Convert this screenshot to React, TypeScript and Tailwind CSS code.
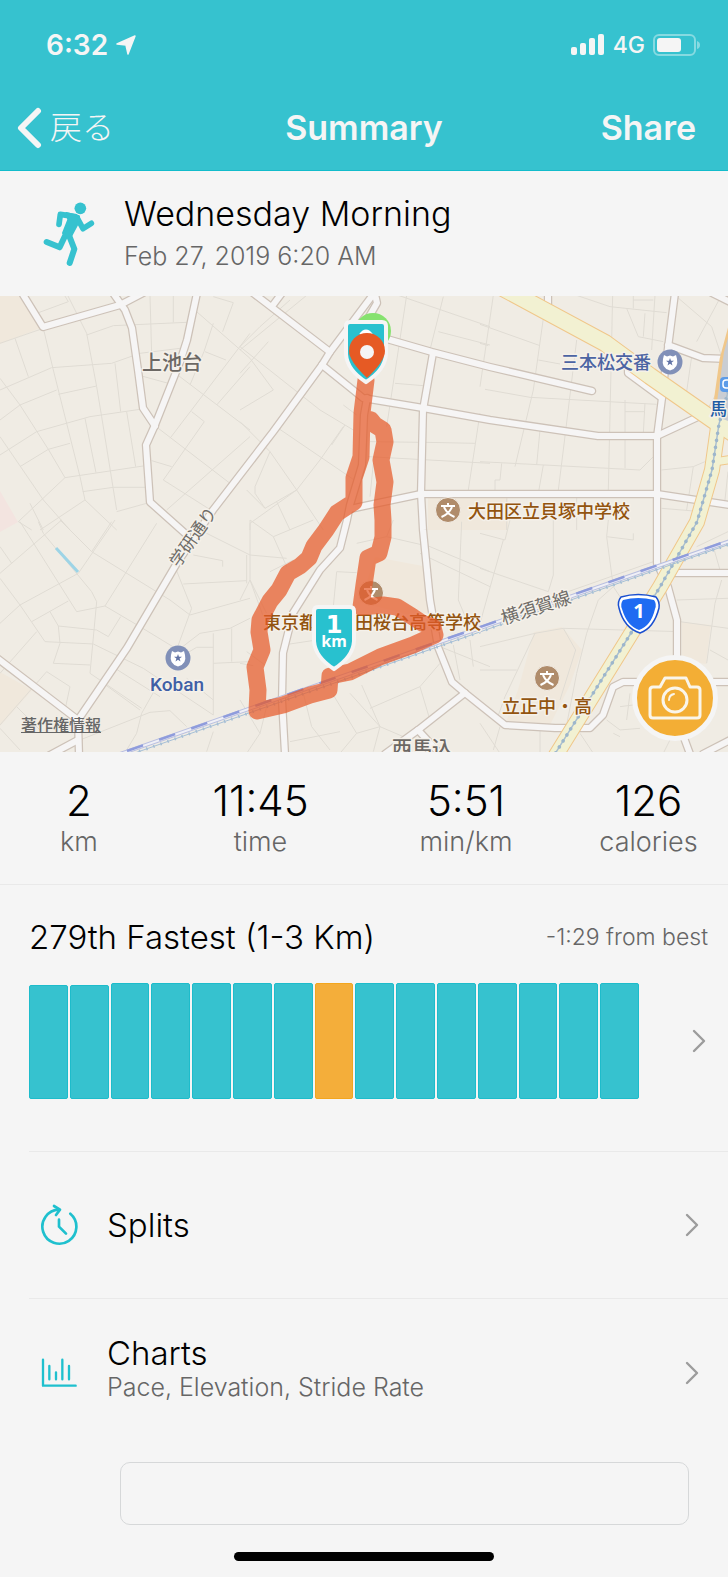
import type { ReactNode } from "react";

const BARS = [114, 114, 116, 116, 116, 116, 116, 116, 116, 116, 116, 116, 116, 116, 116];
const CURRENT_BAR = 7;

const STATS = [
  { value: "2", label: "km", width: "w-[158px]" },
  { value: "11:45", label: "time", width: "w-[205px]" },
  { value: "5:51", label: "min/km", width: "w-[206px]" },
  { value: "126", label: "calories", width: "w-[159px]" },
];

const ROADS = [
  "M22 293L43 327L120 305L143 293",
  "M113 293L125 310L132 328L138 370L143 408L155 426",
  "M197 293L187 340L180 362L155 425L146 445L150 502L187 535",
  "M372 296L330 352L322 365L273 432L213 510L177 563L127 648L78 720L79 754",
  "M-3 658L78 720",
  "M50 755L78 740",
  "M253 293L330 352",
  "M273 305L282 293",
  "M374 290L377 303L366 322",
  "M322 365L363 398L423 408L490 420L598 436H657L700 416",
  "M380 337L432 352L490 367L592 391",
  "M433 353L423 410L421 493L423 530L430 600L438 647L452 682L465 693L505 725L555 728H590L603 715L613 687L623 682H730",
  "M350 509L421 494H657L730 505",
  "M675 293L663 387L662 398L657 437V563L668 587L677 620V687L680 727L690 754",
  "M628 366V373L662 398",
  "M548 293V310",
  "M668 345L703 358L728 359",
  "M712 293L730 302",
  "M672 573H730",
  "M703 754L730 740",
  "M465 693L418 730L385 754",
  "M418 730L442 756",
  "M367 398L364 415L362 465L350 505L347 520L340 548L320 570L293 613L283 653L282 700L285 754",
];

// Side streets, one tile per block of the map, drawn at 3 units per pixel.
const TILES = [
  {
    transform: "translate(0 290) scale(0.3333)",
    d: "M0 160L130 115M110 70L205 35L190 10M45 145L85 260M130 115L160 240L240 560L255 630L350 720M0 300L155 233L335 220L420 190L540 175M200 10L260 130L290 290L305 380L350 660M260 135L340 107L560 97M345 220L362 365M175 313L290 288M0 390L60 345L170 300M0 495L110 425L270 380L420 358M60 530L145 478L210 460M0 265L60 345L145 478L195 563L430 528M195 563L55 695M0 440L130 630L210 720M255 385L288 548M380 365L407 530M248 605L340 592L435 592M350 665L440 640M90 640L130 720M640 100L612 185L570 285M615 185L678 210M590 65L750 205M750 130L510 445M750 230L650 345M520 245L750 420M475 415L690 580M575 365L613 395L490 570L640 665M455 512L515 530M750 440L500 660M640 20L700 38L668 125M450 16L455 190M520 16V97M425 258L505 280M55 695L95 720M255 630L120 720",
  },
  {
    transform: "translate(240 290) scale(0.3333)",
    d: "M0 170L240 360L340 420M200 16L0 180M150 30L60 110L0 170M85 155L0 250M30 205L100 300L0 360M115 415L350 575M0 395L90 485L170 600L250 720M90 485L45 590V610L75 655M310 410L240 510L170 600L30 700V720M275 465L315 405M110 635L150 720M170 600L75 655L20 600M310 345L350 375M500 16L440 410M465 280L550 287M475 16L750 110M610 20L570 180M595 125L750 165M555 457L705 460M390 455L540 457M385 500L750 520M720 370L685 600M400 520L390 620M640 380L720 395",
  },
  {
    transform: "translate(480 290) scale(0.3333)",
    d: "M0 103L180 167M0 160L25 167M40 16L0 290M195 50L160 300L105 530M290 16L390 50L560 68M398 16L385 600M525 16L515 180M440 55L475 140L550 155M495 70L490 140M460 0V55M520 30H460M590 20L695 110L725 200M717 30L650 155M635 200L620 305M15 298L150 322M150 322L530 343M175 210L240 222M290 150L250 480L235 600M0 515L480 540L520 500M65 520L60 570H45V600M180 420L170 525M190 525L175 610M435 330V535M495 340L490 430M435 365H495M545 540L640 530L675 515M640 530L620 660M545 655L640 663M744 545L735 630M715 300L670 380M290 620V720M80 625V720",
  },
  {
    transform: "translate(0 520) scale(0.3333)",
    d: "M60 5L230 275L315 258L470 10M0 160L185 0M115 5L130 40L275 215L290 245L270 460L425 565M345 0L235 160L60 255L0 310M0 80L35 130M335 5L275 95L180 0M275 95L510 240L570 285M525 140L575 265L535 375M570 285L750 235M550 192L740 182M580 105L668 122V140M610 35L750 105M740 105V190M315 258L420 320L535 390M0 175L60 255L135 365L280 372L430 445L640 585M95 305L205 243M150 275L175 318L290 330M175 318L180 370L160 430L270 435M290 330L325 350L362 290M110 335L0 460M140 455L210 500L195 570M140 455L0 615M50 560L120 630M535 390L600 340L690 325L750 295M640 340V585M695 325V425M640 430L750 425M560 400L590 382H640M345 445L480 530M470 500L425 580L410 640L380 690M560 620L510 572L450 577L240 660M560 475L640 540M0 625L60 690M640 635L620 695M310 490L420 570",
  },
  {
    transform: "translate(240 520) scale(0.3333)",
    d: "M30 0V180L80 280M30 0L100 50L220 0M100 50L140 140M90 155L160 120M30 105L140 115M0 240L30 180M30 180L70 290M20 395L75 435M0 430L40 437M0 540L60 640L20 700M80 560L60 640M130 375L230 360M290 155L280 260M290 155L350 158M350 70L440 50L570 80L750 155M665 5L655 240L680 300M540 100L750 200M190 520L215 620L270 690M280 525L350 640L420 620L330 520M350 640L300 700M420 620L400 695M390 565L540 500L600 430M365 495L420 620L490 650M540 500L570 600M150 665L300 635M600 380L750 440M640 375L660 480M690 360L700 440M460 0L440 50",
  },
  {
    transform: "translate(480 520) scale(0.3333)",
    d: "M0 145L205 215L220 165V0M70 60L0 310M0 40L75 60L90 0M385 0L380 50L460 60V40M380 50L400 200L440 260M400 200L355 240L320 340L290 460L255 640M0 380L165 340L250 325L600 335M165 340L75 530L50 600M250 325L287 390L240 540M0 450H110M650 80L744 35M700 80L720 150M590 240L744 235M725 180L705 250L680 430M600 305L744 325M690 390L744 420M450 520L440 600M420 560L460 555M380 600L420 630L480 625M400 640L420 650M570 660L540 720M0 610L60 700M60 620L40 690M180 620V700M300 640L340 700M250 220L520 125",
  },
];

const ROUTE =
  "M366 380L362 413L361 457L354 478V502L337 513L326 530L314 546L309 558L300 566L288 573L279 590L270 601L260 620L259 632L262 650L255 667L258 690L257 711L283 705L310 695L329 690L330 676L350 672L380 657L413 645L435 635L433 627L422 623L413 617L397 607L383 605L361 607L364 585L368 558L379 553L383 537V520L382 505L385 482L381 460L385 442L383 430L375 425L371 420L364 418";

function Chevron() {
  return (
    <svg className="h-[24px] w-[14px] shrink-0" viewBox="0 0 14 24" fill="none" stroke="#9c9c9c" strokeWidth="2.4" strokeLinecap="round" strokeLinejoin="round">
      <path d="M2 2L12 12L2 22" />
    </svg>
  );
}

function RunnerIcon() {
  return (
    <svg className="h-[66px] w-[52px] shrink-0" viewBox="130 606 156 198" fill="none" stroke="#36c2cf" strokeLinecap="round" strokeLinejoin="round">
      <circle cx="242" cy="628" r="17.5" fill="#36c2cf" stroke="none" />
      <path d="M178 676L182 646L226 653" strokeWidth="17" />
      <path d="M232 656L250 689L275 673" strokeWidth="17" />
      <path d="M200 642L238 652L234 674L214 712L190 702L206 662Z" fill="#36c2cf" strokeWidth="6" />
      <path d="M141 729L180 745L202 698" strokeWidth="18" />
      <path d="M206 704L224 750L210 792" strokeWidth="18" />
    </svg>
  );
}

function SplitsIcon() {
  return (
    <svg className="h-[42px] w-[38px] shrink-0" viewBox="119 75 114 126" fill="none" stroke="#1fc0ce" strokeWidth="8" strokeLinecap="round" strokeLinejoin="round">
      <path d="M210 104A51 51 0 1 1 176 92" />
      <path d="M161 81L179 92L167 108" />
      <path d="M176 122V143L197 164" />
    </svg>
  );
}

function ChartsIcon() {
  return (
    <svg className="h-[30px] w-[36px] shrink-0" viewBox="127 534 108 90" fill="none" stroke="#1fc0ce" strokeWidth="7" strokeLinecap="round" strokeLinejoin="round">
      <path d="M133 539V617H231M152 558V598M172 577V598M191 539V598M211 558V598" />
    </svg>
  );
}

function SchoolMark({ x, y }: { x: number; y: number }) {
  return (
    <g transform={`translate(${x} ${y})`}>
      <circle r="12.5" fill="#b08c6b" stroke="#f4efe8" />
      <path d="M0-7V-4M-7-4H7M-4-3Q-1 4 6.500 7M4-3Q1 4-6.500 7" fill="none" stroke="#fff" strokeWidth="2" />
    </g>
  );
}

function PoliceMark({ x, y }: { x: number; y: number }) {
  return (
    <g transform={`translate(${x} ${y})`}>
      <circle r="12.500" fill="#8190b8" />
      <path d="M-6-7L-3-5.500L0-6.500L3-5.500L6-7L7-3Q9 6 0 8.500Q-9 6-7-3Z" fill="#fff" />
      <path d="M0-4L1 -1.200H4L1.600 .5L2.500 3.400L0 1.700L-2.500 3.400L-1.600 .5L-4-1.200H-1Z" fill="#6274a6" />
    </g>
  );
}

function RouteMap() {
  return (
    <svg
      className="h-[456px] w-full"
      viewBox="0 296 728 456"
      preserveAspectRatio="xMidYMid slice"
      fontFamily="'Noto Sans CJK JP', sans-serif"
    >
      <rect x="-400" y="290" width="1600" height="480" fill="#f0ece4" />
      <g fill="#f0e8dc">
        <path d="M0 290H22L43 327L0 344Z" />
        <path d="M0 672L32 690L0 726Z" />
        <path d="M375 557L428 567L436 622L360 602Z" />
        <path d="M534 632L562 627L582 650L570 685L550 725H505L518 690Z" />
        <path d="M682 622L711 625L706 664L682 660Z" />
        <path d="M428 498H508V530H428Z" />
      </g>
      <path d="M0 491L18 522L0 532Z" fill="#f3e4e0" />
      <g fill="none" stroke="#e0dcd4" strokeWidth="3">
        {TILES.map((tile) => (
          <path key={tile.transform} transform={tile.transform} d={tile.d} />
        ))}
      </g>
      <path d="M56 548L78 572" stroke="#9dd4e6" strokeWidth="3" />

      <g fill="none" strokeLinecap="round" strokeLinejoin="round">
        <g stroke="#cdc2b8" strokeWidth="8.500">
          {ROADS.map((d) => <path key={d} d={d} />)}
        </g>
        <g stroke="#f6f5f5" strokeWidth="6">
          {ROADS.map((d) => <path key={d} d={d} />)}
        </g>
        <g stroke="#f0c78a">
          <path d="M740 300L724 360L717 410" strokeWidth="9" />
          <path d="M501 287L605 343L650 376L713 420L740 438" strokeWidth="18" />
          <path d="M719 420L712 470L697 522L660 587L553 760" strokeWidth="16" />
          <path d="M714 462L740 458" strokeWidth="9" />
        </g>
        <g stroke="#f2f1d2">
          <path d="M501 287L605 343L650 376L713 420L740 438" strokeWidth="16" />
          <path d="M719 420L712 470L697 522L660 587L553 760" strokeWidth="14" />
          <path d="M714 462L740 458" strokeWidth="7" />
        </g>
        <path d="M728 338L724 352L715 416L728 421Z" fill="#c9cdd3" />
        <path d="M728 392L719 424L712 470L697 522L660 587L553 757" stroke="#a9bfd0" strokeWidth="1.500" />
        <path d="M728 392L719 424L712 470L697 522L660 587L553 757" stroke="#9db6cb" strokeWidth="3.500" strokeDasharray="0.1 7" />
      </g>

      {/* Railway */}
      <g fill="none">
        <path d="M120 754L440 642L730 541" stroke="#b9bfe0" strokeWidth="4" />
        <path d="M120 754L440 642L730 541" stroke="#f0f0f6" strokeWidth="2" />
        <path d="M127 751L440 641L730 540" stroke="#8f9cdc" strokeWidth="2.500" strokeDasharray="17 17" />
        <path d="M132 754L440 646L730 544" stroke="#a6bfd6" strokeWidth="1" />
        <path d="M132 754L440 646L730 544" stroke="#a6bfd6" strokeWidth="3" strokeDasharray="1.500 6" />
      </g>

      <g stroke="#f5f1ea" strokeWidth="3" strokeLinejoin="round" paintOrder="stroke" fontSize="18" fontWeight="500">
        <text x="142" y="370" fontSize="20" fill="#6c6864">上池台</text>
        <text x="561" y="369" fill="#4c64a3">三本松交番</text>
        <text x="468" y="518" fill="#93540f">大田区立貝塚中学校</text>
        <text x="263" y="629" fill="#93540f">東京都</text>
        <text x="355" y="629" fill="#93540f">田桜台高等学校</text>
        <text x="502" y="713" fill="#93540f">立正中・高</text>
        <text x="392" y="756" fontSize="20" fill="#6c6864">西馬込</text>
        <text x="710" y="415" fontSize="17" fill="#1d5ba5">馬</text>
        <text x="0" y="6" fontSize="18" fontWeight="400" fill="#6f6c68" textAnchor="middle" transform="translate(536 608) rotate(-18)">横須賀線</text>
        <text x="0" y="6" fontSize="17" fontWeight="400" fill="#6f6c68" textAnchor="middle" transform="translate(193 537) rotate(-55)">学研通り</text>
        <text x="150" y="691" fill="#3f5fa6" fontFamily="Roboto, sans-serif" fontSize="19">Koban</text>
      </g>

      <SchoolMark x={448} y={510} />
      <SchoolMark x={371} y={593} />
      <SchoolMark x={547} y={678} />
      <PoliceMark x={670} y={362} />
      <PoliceMark x={178} y={658} />
      <rect x="720" y="377" width="16" height="15" rx="4" fill="#5b9be8" />
      <rect x="723" y="380" width="10" height="8" rx="3" fill="none" stroke="#fff" strokeWidth="1.500" />

      <g strokeLinejoin="round">
        <path d="M621 597Q638 592 656 597Q660 602 659 608Q654 628 640 633Q624 628 619 608Q617 602 621 597Z" fill="#fff" stroke="#1a4fd0" strokeWidth="1.500" />
        <path d="M623 600Q638 596 654 600Q657 604 655 609Q651 626 639 630Q627 626 622 609Q620 604 623 600Z" fill="#1f6bf2" />
        <text x="639" y="618" fill="#fff" fontFamily="'Noto Sans', sans-serif" fontSize="20" fontWeight="700" textAnchor="middle">1</text>
      </g>

      <path d={ROUTE} fill="none" stroke="#e65a2a" strokeOpacity="0.72" strokeWidth="17" strokeLinejoin="round" strokeLinecap="round" />

      {/* Start, distance and finish pins */}
      <circle cx="373" cy="331" r="18" fill="#86e26f" />
      <path d="M350 322H382Q386 322 386 326V354Q385 370 366 382Q347 370 346 354V326Q346 322 350 322Z" fill="#28c1cf" stroke="#f5f5f5" strokeWidth="4" />
      <path d="M361 335Q366 328 371 335" fill="none" stroke="#fff" strokeWidth="4" />
      <path d="M367 378Q349 361 349 351A18 18 0 0 1 385 351Q385 361 367 378Z" fill="#e65a24" />
      <circle cx="367" cy="352" r="7" fill="#f5f5f5" />
      <path d="M318 607H350Q354 607 354 611V641Q353 657 334 669Q315 657 314 641V611Q314 607 318 607Z" fill="#28c1cf" stroke="#f5f5f5" strokeWidth="4" />
      <g fill="#fff" fontWeight="700" textAnchor="middle">
        <text x="334" y="633" fontSize="24" fontFamily="'DejaVu Sans', sans-serif">1</text>
        <text x="334" y="647" fontSize="16" fontFamily="'Noto Sans', sans-serif">km</text>
      </g>
    </svg>
  );
}

function DetailRow({ icon, title, subtitle }: { icon: ReactNode; title: string; subtitle?: string }) {
  return (
    <button type="button" className="flex h-[147px] w-full items-center pr-[29px] text-left">
      <span className="mr-[18px] flex w-[60px] justify-center">{icon}</span>
      <span className={`flex grow flex-col ${subtitle ? "pb-[8px]" : ""}`}>
        <span className="text-[33px] leading-[36px] font-light text-black">{title}</span>
        {subtitle && <span className="text-[25px] leading-[32px] font-light text-[#666]">{subtitle}</span>}
      </span>
      <Chevron />
    </button>
  );
}

export default function App() {
  return (
    <div className="flex min-h-screen w-full flex-col bg-[#f5f5f5] font-['Inter','Noto_Sans_CJK_JP',sans-serif]">
      <header className="border-b border-[#12bccb] bg-[#36c2cf] text-[#f5f5f5]">
        {/* Status bar */}
        <div className="flex h-[90px] items-center justify-between pr-[27px] pl-[46px]">
          <div className="flex items-center gap-2">
            <span className="text-[28px] leading-[32px] font-semibold">6:32</span>
            <svg className="h-[20px] w-[20px]" viewBox="0 0 20 20" fill="currentColor" stroke="currentColor" strokeLinejoin="round">
              <path d="M19 1L12 19L10 10L1 9Z" strokeWidth="1.500" />
            </svg>
          </div>
          <div className="flex items-center gap-2">
            <svg className="h-[22px] w-[34px]" viewBox="0 0 34 22" fill="currentColor">
              <rect x="0" y="13" width="6" height="8" rx="2" />
              <rect x="9" y="9" width="6" height="12" rx="2" />
              <rect x="18" y="4" width="6" height="17" rx="2" />
              <rect x="27" y="0" width="6" height="21" rx="2" />
            </svg>
            <span className="text-[23px] leading-[32px] font-medium">4G</span>
            <svg className="h-[22px] w-[48px]" viewBox="0 0 48 22" fill="none">
              <rect x="1" y="1" width="41" height="20" rx="5" stroke="#86dae1" strokeWidth="2" />
              <rect x="4" y="4" width="24" height="14" rx="3" fill="currentColor" />
              <path d="M44 7Q47 8 47 11Q47 14 44 15Z" fill="#86dae1" />
            </svg>
          </div>
        </div>
        <nav className="grid h-[80px] grid-cols-3 items-center px-[32px] pb-[4px]">
          <button type="button" className="-ml-[15px] flex items-center gap-2 justify-self-start text-[32px] leading-[40px] font-light">
            <svg className="h-[42px] w-[25px]" viewBox="0 0 25 42" fill="none" stroke="currentColor" strokeWidth="6" strokeLinecap="round" strokeLinejoin="round">
              <path d="M21 4L4 21L21 38" />
            </svg>
            戻る
          </button>
          <h1 className="justify-self-center text-[34px] leading-[40px] font-semibold">Summary</h1>
          <button type="button" className="justify-self-end text-[34px] leading-[40px] font-semibold">Share</button>
        </nav>
      </header>

      <section className="flex h-[125px] items-center pl-[43px]">
        <RunnerIcon />
        <div className="pl-[29px]">
          <h2 className="text-[34px] leading-[44px] font-light text-black">Wednesday Morning</h2>
          <p className="text-[25px] leading-[40px] font-light text-[#666]">Feb 27, 2019 6:20 AM</p>
        </div>
      </section>

      <section className="relative overflow-hidden">
        <RouteMap />
        <a href="#copyright" className="absolute bottom-[15px] left-[21px] text-[16px] leading-[24px] font-medium text-[#666] underline">著作権情報</a>
        <button
          type="button"
          aria-label="Add photo"
          className="absolute right-[10px] bottom-[11px] flex h-[86px] w-[86px] items-center justify-center rounded-full border-5 border-[#f5f5f5] bg-[#f3ae35]"
        >
          <svg className="h-[46px] w-[54px]" viewBox="0 0 54 46" fill="none" stroke="#faf5ea" strokeWidth="3" strokeLinejoin="round" strokeLinecap="round">
            <path d="M5 12H12L17 3H38L42 12H49Q52 12 52 15V40Q52 43 49 43H5Q2 43 2 40V15Q2 12 5 12Z" />
            <circle cx="27" cy="25" r="12" />
            <path d="M21 25Q21 20 26 19" strokeWidth="2" />
          </svg>
        </button>
      </section>

      <section className="flex h-[133px] justify-between border-b border-[#e9e9e9] pt-[25px]">
        {STATS.map((stat) => (
          <div key={stat.label} className={`flex flex-col items-center ${stat.width}`}>
            <span className="text-[42px] leading-[48px] font-light text-black">{stat.value}</span>
            <span className="text-[27px] leading-[34px] font-light text-[#666]">{stat.label}</span>
          </div>
        ))}
      </section>

      <section className="ml-[29px] h-[267px] border-b border-[#e9e9e9] pt-[30px]">
        <div className="flex items-center justify-between pr-[20px]">
          <h2 className="text-[33px] leading-[44px] font-light text-black">279th Fastest (1-3 Km)</h2>
          <span className="text-[23px] leading-[44px] font-light text-[#666]">-1:29 from best</span>
        </div>
        <button type="button" aria-label="Show personal records" className="mt-[24px] flex w-full items-center pr-[22px]">
          <span className="mr-[53px] flex grow items-end gap-[2px]">
            {BARS.map((height, i) => (
              <span
                key={i}
                className={`grow rounded-[2px] border ${i === CURRENT_BAR ? "border-[#f3a61d] bg-[#f4ae3a]" : "border-[#1dbccb] bg-[#36c2cf]"}`}
                style={{ height }}
              />
            ))}
          </span>
          <Chevron />
        </button>
      </section>

      <section className="ml-[29px] divide-y divide-[#e9e9e9]">
        <DetailRow icon={<SplitsIcon />} title="Splits" />
        <DetailRow icon={<ChartsIcon />} title="Charts" subtitle="Pace, Elevation, Stride Rate" />
      </section>

      <input
        type="text"
        aria-label="Notes"
        className="mt-[16px] mr-[39px] ml-[120px] h-[63px] rounded-[10px] border border-[#d6d8d9] px-4 text-[25px] outline-none"
      />
      <div className="mx-auto mt-[27px] mb-[15px] h-[9px] w-[260px] rounded-full bg-black" />
    </div>
  );
}
